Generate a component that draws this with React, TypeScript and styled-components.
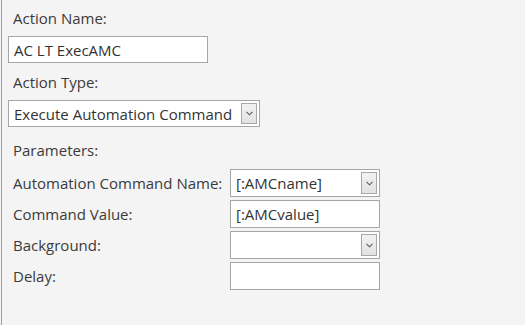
import React from "react";
import styled, { createGlobalStyle } from "styled-components";

const Global = createGlobalStyle`
  html, body { margin: 0; padding: 0; background: #f4f4f4; }
  body { font-family: "Open Sans", "Noto Sans", sans-serif; }
`;

const Panel = styled.div`
  margin-left: 1px;
  border-left: 1px solid #a0a0a0;
  height: 325px;
  box-sizing: border-box;
  padding: 8px 0 0 6px;
  display: flex;
  flex-direction: column;
  align-items: flex-start;
  background: #f4f4f4;
`;

const Label = styled.div<{ $top?: number; $bottom?: number }>`
  font-size: 15px;
  line-height: 20px;
  height: 20px;
  color: #3b3b3b;
  padding-left: 5px;
  margin-top: ${(p) => p.$top ?? 0}px;
  margin-bottom: ${(p) => p.$bottom ?? 0}px;
  white-space: nowrap;
`;

const Box = styled.div<{ $width: number; $height?: number }>`
  position: relative;
  width: ${(p) => p.$width}px;
  height: ${(p) => p.$height ?? 27}px;
  box-sizing: border-box;
  border: 1px solid #a6a6a6;
  background: #ffffff;
  display: flex;
  align-items: center;
  padding-left: 5px;
  font-size: 15px;
  color: #333333;
  white-space: nowrap;
  overflow: hidden;
`;

const DropButton = styled.div`
  position: absolute;
  right: 2px;
  top: 2px;
  bottom: 2px;
  width: 16px;
  box-sizing: border-box;
  border: 1px solid #a8a8a8;
  background: linear-gradient(#f2f2f2, #e2e2e2);
  display: flex;
  align-items: center;
  justify-content: center;
`;

const Grid = styled.div`
  margin-top: 9px;
  display: grid;
  grid-template-columns: 222px 150px;
  grid-auto-rows: 28px;
  row-gap: 3px;
  align-items: center;
`;

const Chevron = () => (
  <svg width="7" height="5" viewBox="0 0 7 5">
    <polyline points="0.5,0.8 3.5,3.8 6.5,0.8" fill="none" stroke="#5a5a5a" strokeWidth="1.1" />
  </svg>
);

const Select: React.FC<{ width: number; height?: number; children?: React.ReactNode }> = ({ width, height, children }) => (
  <Box $width={width} $height={height}>
    {children}
    <DropButton>
      <Chevron />
    </DropButton>
  </Box>
);

export default function App() {
  return (
    <>
      <Global />
      <Panel>
        <Label $bottom={8}>Action Name:</Label>
        <Box $width={200}>AC LT ExecAMC</Box>
        <Label $top={9} $bottom={8}>Action Type:</Label>
        <Select width={252}>Execute Automation Command</Select>
        <Label $top={13}>Parameters:</Label>
        <Grid>
          <Label>Automation Command Name:</Label>
          <Select width={150} height={28}>[:AMCname]</Select>
          <Label>Command Value:</Label>
          <Box $width={150} $height={28}>[:AMCvalue]</Box>
          <Label>Background:</Label>
          <Select width={150} height={28} />
          <Label>Delay:</Label>
          <Box $width={150} $height={28} />
        </Grid>
      </Panel>
    </>
  );
}
